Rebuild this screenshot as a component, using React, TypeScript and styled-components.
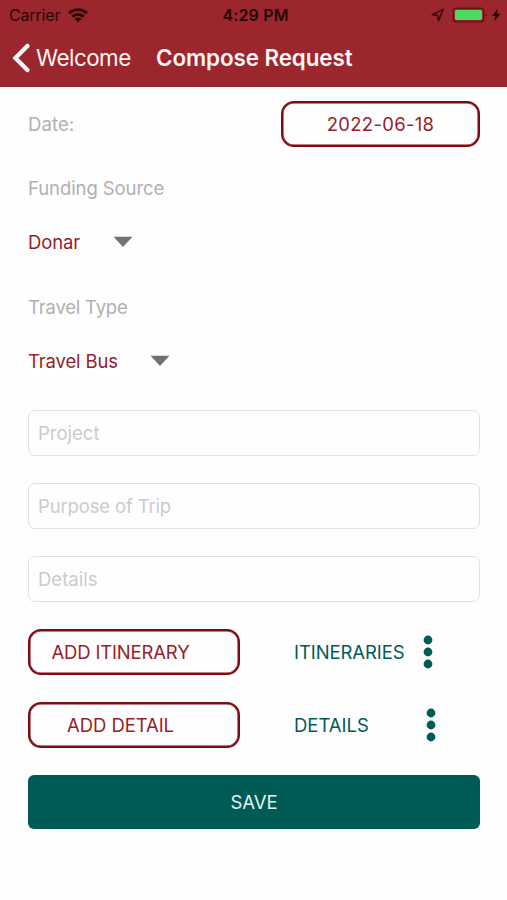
import React from "react";
import styled, { createGlobalStyle } from "styled-components";

const RED = "#9b262e";
const MAROON = "#7d0b12";
const TEXT_RED = "#981d29";
const GREEN = "#005b57";

const GlobalStyle = createGlobalStyle`
  * { box-sizing: border-box; }
  body { margin: 0; background: #fefefe; }
  button, input { font: inherit; }
`;

const Screen = styled.main`
  width: 507px;
  height: 900px;
  overflow: hidden;
  background: #fefefe;
  font-family: Inter, "Liberation Sans", sans-serif;
  font-size: 18.5px;
  line-height: 24px;
`;

const Header = styled.header`
  height: 87px;
  background: ${RED};
  border-bottom: 1px solid #8e2028;
`;

const StatusBar = styled.div`
  display: grid;
  grid-template-columns: 1fr auto 1fr;
  align-items: center;
  height: 30px;
  padding: 0 5px 0 9px;
  color: #260607;
  font-size: 16px;
`;

const StatusGroup = styled.div<{ $end?: boolean }>`
  display: flex;
  align-items: center;
  justify-content: ${(p) => (p.$end ? "flex-end" : "flex-start")};
  gap: 8px;
  letter-spacing: -0.15px;
`;

const Clock = styled.time`
  font-weight: 600;
  letter-spacing: 0.15px;
`;

const NavBar = styled.nav`
  display: flex;
  align-items: center;
  height: 56px;
  padding-left: 12px;
  color: #fff5f4;
  font-size: 22.4px;
`;

const BackButton = styled.button`
  display: flex;
  align-items: center;
  gap: 6px;
  width: 143px;
  padding: 0;
  border: 0;
  background: none;
  color: inherit;
  letter-spacing: -0.5px;
`;

const Title = styled.h1`
  margin: 0;
  padding-left: 1px;
  font-size: 22.4px;
  font-weight: 600;
  letter-spacing: -0.08px;
`;

const Form = styled.form`
  display: flex;
  flex-direction: column;
  gap: 27px;
  padding: 14px 27px 0 28px;
`;

const DateRow = styled.div`
  display: flex;
  justify-content: space-between;
  align-items: center;
  height: 45px;
`;

const Label = styled.label<{ $track?: number }>`
  color: #b0b0b0;
  letter-spacing: ${(p) => p.$track ?? 0}px;
`;

const OutlineButton = styled.button<{ $width: number; $shift?: number; $track?: number }>`
  width: ${(p) => p.$width}px;
  height: 46px;
  padding: 0 ${(p) => p.$shift ?? 0}px 0 0;
  border: 2px solid ${MAROON};
  border-radius: 13px;
  box-shadow: inset 0 0 0 0.5px ${MAROON};
  background: transparent;
  color: ${TEXT_RED};
  letter-spacing: ${(p) => p.$track ?? 0}px;
`;

const Field = styled.div`
  display: flex;
  flex-direction: column;
  gap: 19px;
  height: 92px;
  padding-top: 3px;
`;

const Picker = styled.div<{ $gap: number }>`
  display: flex;
  align-items: center;
  gap: ${(p) => p.$gap}px;
  height: 46px;
  color: ${TEXT_RED};
  letter-spacing: -0.15px;
`;

const Entries = styled.div`
  display: flex;
  flex-direction: column;
  gap: 27px;
  margin-top: -1px;
`;

const TextField = styled.input<{ $track: number }>`
  width: 100%;
  height: 46px;
  padding: 0 8px 0 9px;
  border: 1px solid #e2e2e3;
  border-radius: 7px;
  background: transparent;
  outline: none;
  letter-spacing: ${(p) => p.$track}px;
  &::placeholder { color: #cbcbcd; opacity: 1; }
`;

const ActionRow = styled.div`
  display: flex;
  align-items: center;
  height: 46px;
  color: ${GREEN};
`;

const ListName = styled.span<{ $width: number; $track: number }>`
  width: ${(p) => p.$width}px;
  margin-left: 54px;
  letter-spacing: ${(p) => p.$track}px;
`;

const SaveButton = styled.button`
  height: 54px;
  border: 0;
  border-radius: 6px;
  background: ${GREEN};
  color: #e4f2f0;
  letter-spacing: -0.1px;
`;

const Caret = () => (
  <svg width="20" height="12" viewBox="0 0 20 12">
    <path d="M0.5 0.7H19.5L10 11Z" fill="#727272" />
  </svg>
);

const Dots = () => (
  <svg width="10" height="34" viewBox="0 0 10 34">
    <g fill={GREEN}>
      <circle cx="5" cy="5" r="4.4" />
      <circle cx="5" cy="17" r="4.4" />
      <circle cx="5" cy="29" r="4.4" />
    </g>
  </svg>
);

const Wifi = () => (
  <svg width="20" height="15" viewBox="0 0 20 15" fill="none" stroke="#260607" strokeWidth="2.8">
    <path d="M1.1 5.1C6.2 0.4 13.8 0.4 18.9 5.1" />
    <path d="M4.3 8.6C7.6 5.6 12.4 5.6 15.7 8.6" />
    <path d="M10 14.2L6.5 10.8C8.6 9 11.4 9 13.5 10.8Z" fill="#260607" stroke="none" />
  </svg>
);

const Chevron = () => (
  <svg width="18" height="30" viewBox="0 0 18 30">
    <path d="M15.4 2.9L3.4 15L15.4 27.1" fill="none" stroke="#fff9f8" strokeWidth="4.3" strokeLinecap="round" strokeLinejoin="miter" />
  </svg>
);

const StatusIcons = () => (
  <svg width="72" height="20" viewBox="0 0 72 20">
    <path d="M2.2 9.6L13.2 4.4L8.5 15.8L7.6 10.3Z" fill="none" stroke="#3f090c" strokeWidth="1.6" strokeLinejoin="round" />
    <rect x="23.2" y="3.2" width="30.6" height="13.6" rx="3.2" fill="none" stroke="#65151a" strokeWidth="1.5" />
    <rect x="25" y="5" width="27" height="10" rx="1.4" fill="#4cda61" />
    <path d="M55.8 8Q58.6 10 55.8 12Z" fill="#65151a" />
    <path d="M68 3.4L62 11H65.3L64 16.6L70.6 8.8H67Z" fill="#260607" />
  </svg>
);

export default function App() {
  return (
    <>
      <GlobalStyle />
      <Screen>
        <Header>
          <StatusBar>
            <StatusGroup>Carrier <Wifi /></StatusGroup>
            <Clock>4:29 PM</Clock>
            <StatusGroup $end><StatusIcons /></StatusGroup>
          </StatusBar>
          <NavBar>
            <BackButton><Chevron />Welcome</BackButton>
            <Title>Compose Request</Title>
          </NavBar>
        </Header>
        <Form>
          <DateRow>
            <Label $track={0.15}>Date:</Label>
            <OutlineButton type="button" $width={199} $track={0.28}>2022-06-18</OutlineButton>
          </DateRow>
          <Field>
            <Label $track={-0.08}>Funding Source</Label>
            <Picker $gap={33}>Donar <Caret /></Picker>
          </Field>
          <Field>
            <Label $track={-0.2}>Travel Type</Label>
            <Picker $gap={32}>Travel Bus <Caret /></Picker>
          </Field>
          <Entries>
            <TextField $track={0} placeholder="Project" />
            <TextField $track={-0.15} placeholder="Purpose of Trip" />
            <TextField $track={0} placeholder="Details" />
            <ActionRow>
              <OutlineButton type="button" $width={212} $shift={27} $track={-0.17}>ADD ITINERARY</OutlineButton>
              <ListName $width={129} $track={-0.08}>ITINERARIES</ListName>
              <Dots />
            </ActionRow>
            <ActionRow>
              <OutlineButton type="button" $width={212} $shift={27} $track={-0.08}>ADD DETAIL</OutlineButton>
              <ListName $width={132} $track={0}>DETAILS</ListName>
              <Dots />
            </ActionRow>
            <SaveButton type="button">SAVE</SaveButton>
          </Entries>
        </Form>
      </Screen>
    </>
  );
}
